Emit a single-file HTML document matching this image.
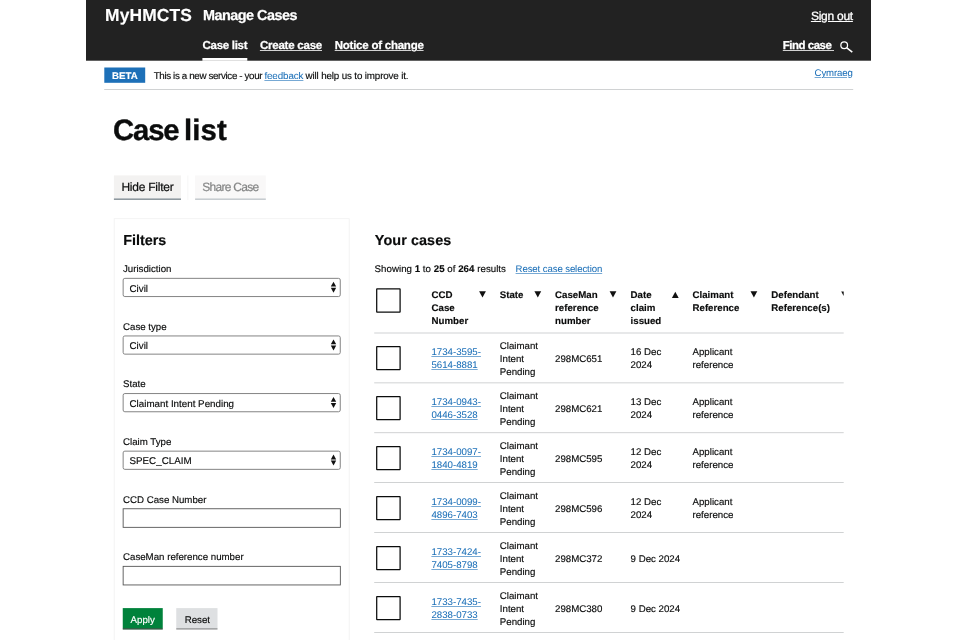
<!DOCTYPE html><html lang="en"><head><meta charset="utf-8"><title>Case list - Manage Cases</title>
<style>html,body{margin:0;padding:0;background:#fff;}body{width:960px;height:640px;position:relative;overflow:hidden;will-change:transform;text-rendering:geometricPrecision;font-family:"Liberation Sans", Arial, sans-serif;}div,span,a{position:absolute;box-sizing:border-box;}span,a{white-space:nowrap;display:block;-webkit-text-stroke:0.15px;}a{text-decoration:underline;text-decoration-thickness:0.6px;text-underline-offset:1px;}svg{position:absolute;overflow:visible}</style></head><body>
<svg width="960" height="640" viewBox="0 0 960 640" style="left:0;top:0">
<rect x="86.00" y="0.00" width="785.00" height="60.70" fill="#222222"/>
<rect x="202.40" y="58.00" width="44.90" height="2.80" fill="#fff"/>
<circle cx="844.2" cy="45.3" r="3.35" fill="none" stroke="#fff" stroke-width="1.25"/><path d="M846.8 47.9 L852.3 52.2" stroke="#fff" stroke-width="1.5" fill="none"/>
<rect x="104.30" y="67.50" width="40.90" height="15.30" fill="#1d70b8"/>
<rect x="104.20" y="89.10" width="749.00" height="0.60" fill="#b1b4b6"/>
<rect x="113.90" y="175.40" width="67.10" height="23.20" fill="#f3f2f1"/>
<rect x="113.90" y="198.40" width="67.10" height="1.60" fill="#8f999f"/>
<rect x="187.50" y="175.40" width="0.80" height="24.60" fill="#f3f3f3"/>
<rect x="195.10" y="175.40" width="70.70" height="23.20" fill="#f9f8f8"/>
<rect x="195.10" y="198.40" width="70.70" height="1.60" fill="#c7ccd0"/>
<rect x="114.20" y="218.70" width="235.00" height="440.00" fill="none" stroke="#f1f1f1" stroke-width="0.8"/>
<rect x="123.15" y="278.35" width="217.10" height="18.20" fill="#fff" stroke="#767676" stroke-width="0.9" rx="1.7"/>
<path d="M330.80 286.60 L336.20 286.60 L333.50 281.80 Z" fill="#111"/>
<path d="M330.80 287.80 L336.20 287.80 L333.50 292.80 Z" fill="#111"/>
<rect x="123.15" y="335.95" width="217.10" height="18.20" fill="#fff" stroke="#767676" stroke-width="0.9" rx="1.7"/>
<path d="M330.80 344.20 L336.20 344.20 L333.50 339.40 Z" fill="#111"/>
<path d="M330.80 345.40 L336.20 345.40 L333.50 350.40 Z" fill="#111"/>
<rect x="123.15" y="393.55" width="217.10" height="18.20" fill="#fff" stroke="#767676" stroke-width="0.9" rx="1.7"/>
<path d="M330.80 401.80 L336.20 401.80 L333.50 397.00 Z" fill="#111"/>
<path d="M330.80 403.00 L336.20 403.00 L333.50 408.00 Z" fill="#111"/>
<rect x="123.15" y="451.15" width="217.10" height="18.20" fill="#fff" stroke="#767676" stroke-width="0.9" rx="1.7"/>
<path d="M330.80 459.40 L336.20 459.40 L333.50 454.60 Z" fill="#111"/>
<path d="M330.80 460.60 L336.20 460.60 L333.50 465.60 Z" fill="#111"/>
<rect x="123.15" y="508.75" width="217.20" height="18.60" fill="#fff" stroke="#555" stroke-width="0.9"/>
<rect x="123.15" y="566.35" width="217.20" height="18.60" fill="#fff" stroke="#555" stroke-width="0.9"/>
<rect x="122.75" y="608.10" width="40.00" height="20.30" fill="#00823b"/>
<rect x="122.75" y="628.30" width="40.00" height="1.20" fill="#003418"/>
<rect x="176.25" y="608.10" width="41.25" height="20.30" fill="#dee0e2"/>
<rect x="176.25" y="628.30" width="41.25" height="1.20" fill="#858688"/>
<rect x="376.70" y="288.90" width="23.40" height="23.10" fill="#fff" stroke="#0b0c0c" stroke-width="1.25" rx="0.3"/>
<path d="M479.10 291.20 L485.90 291.20 L482.50 297.50 Z" fill="#111"/>
<path d="M534.40 291.20 L541.20 291.20 L537.80 297.50 Z" fill="#111"/>
<path d="M609.60 291.20 L616.40 291.20 L613.00 297.50 Z" fill="#111"/>
<path d="M671.90 298.10 L678.70 298.10 L675.30 291.80 Z" fill="#111"/>
<path d="M750.50 291.20 L757.30 291.20 L753.90 297.50 Z" fill="#111"/>
<path d="M841.2 291.6 L843.7 291.6 L843.7 296.0 Z" fill="#111"/>
<rect x="374.20" y="332.70" width="469.50" height="0.60" fill="#b1b4b6"/>
<rect x="374.20" y="382.60" width="469.50" height="0.60" fill="#b1b4b6"/>
<rect x="374.20" y="432.50" width="469.50" height="0.60" fill="#b1b4b6"/>
<rect x="374.20" y="482.40" width="469.50" height="0.60" fill="#b1b4b6"/>
<rect x="374.20" y="532.30" width="469.50" height="0.60" fill="#b1b4b6"/>
<rect x="374.20" y="582.20" width="469.50" height="0.60" fill="#b1b4b6"/>
<rect x="374.20" y="632.10" width="469.50" height="0.60" fill="#b1b4b6"/>
<rect x="376.70" y="346.50" width="23.40" height="23.10" fill="#fff" stroke="#0b0c0c" stroke-width="1.25" rx="0.3"/>
<rect x="376.70" y="396.50" width="23.40" height="23.10" fill="#fff" stroke="#0b0c0c" stroke-width="1.25" rx="0.3"/>
<rect x="376.70" y="446.50" width="23.40" height="23.10" fill="#fff" stroke="#0b0c0c" stroke-width="1.25" rx="0.3"/>
<rect x="376.70" y="496.50" width="23.40" height="23.10" fill="#fff" stroke="#0b0c0c" stroke-width="1.25" rx="0.3"/>
<rect x="376.70" y="546.50" width="23.40" height="23.10" fill="#fff" stroke="#0b0c0c" stroke-width="1.25" rx="0.3"/>
<rect x="376.70" y="596.50" width="23.40" height="23.10" fill="#fff" stroke="#0b0c0c" stroke-width="1.25" rx="0.3"/>
</svg>
<span id="t0" style="left:105.00px;top:4.00px;font-size:17.4px;line-height:22.62px;font-weight:700;color:#ffffff;letter-spacing:0.143px;">MyHMCTS</span>
<span id="t1" style="left:203.00px;top:7.01px;font-size:14.4px;line-height:18.72px;font-weight:700;color:#ffffff;letter-spacing:-0.499px;-webkit-text-stroke:0.25px #fff;">Manage Cases</span>
<a id="t2" style="left:810.90px;top:9.01px;font-size:12px;line-height:15.6px;font-weight:400;color:#ffffff;letter-spacing:-0.256px;text-underline-offset:1px;text-decoration-thickness:0.9px;-webkit-text-stroke:0.3px #fff;">Sign out</a>
<span id="t3" style="left:202.50px;top:39.01px;font-size:11.5px;line-height:14.95px;font-weight:700;color:#ffffff;letter-spacing:-0.285px;-webkit-text-stroke:0.25px #fff;">Case list</span>
<a id="t4" style="left:259.90px;top:39.01px;font-size:11.5px;line-height:14.95px;font-weight:700;color:#ffffff;letter-spacing:-0.225px;text-underline-offset:1.1px;text-decoration-thickness:0.9px;text-decoration-color:rgba(255,255,255,0.8);-webkit-text-stroke:0.25px #fff;">Create case</a>
<a id="t5" style="left:334.70px;top:39.01px;font-size:11.5px;line-height:14.95px;font-weight:700;color:#ffffff;letter-spacing:-0.235px;text-underline-offset:1.1px;text-decoration-thickness:0.9px;text-decoration-color:rgba(255,255,255,0.8);-webkit-text-stroke:0.25px #fff;">Notice of change</a>
<a id="t6" style="left:782.80px;top:39.01px;font-size:11.5px;line-height:14.95px;font-weight:700;color:#ffffff;letter-spacing:-0.505px;text-underline-offset:1.1px;text-decoration-thickness:0.9px;text-decoration-color:rgba(255,255,255,0.8);-webkit-text-stroke:0.25px #fff;">Find case&nbsp;</a>
<span id="t7" style="left:112.00px;top:71.01px;font-size:9.7px;line-height:12.61px;font-weight:700;color:#ffffff;letter-spacing:0.061px;">BETA</span>
<span id="t8" style="left:153.70px;top:71.02px;font-size:9.8px;line-height:12.74px;font-weight:400;color:#0b0c0c;letter-spacing:-0.364px;">This is a new service - your</span>
<a id="t9" style="left:264.40px;top:71.02px;font-size:9.8px;line-height:12.74px;font-weight:400;color:#1d70b8;letter-spacing:-0.096px;text-decoration-color:rgba(29,112,184,0.6);-webkit-text-stroke:0.05px;">feedback</a>
<span id="t10" style="left:305.60px;top:71.02px;font-size:9.8px;line-height:12.74px;font-weight:400;color:#0b0c0c;letter-spacing:-0.145px;">will help us to improve it.</span>
<a id="t11" style="left:814.60px;top:68.01px;font-size:9.6px;line-height:12.48px;font-weight:400;color:#1d70b8;letter-spacing:-0.132px;text-decoration-color:rgba(29,112,184,0.6);-webkit-text-stroke:0.05px;">Cymraeg</a>
<span id="t12" style="left:113.00px;top:112.02px;font-size:29.3px;line-height:38.09px;font-weight:700;color:#0b0c0c;letter-spacing:-1.137px;-webkit-text-stroke:0.35px #0b0c0c;">Case</span>
<span id="t13" style="left:183.90px;top:112.02px;font-size:29.3px;line-height:38.09px;font-weight:700;color:#0b0c0c;letter-spacing:0.189px;-webkit-text-stroke:0.35px #0b0c0c;">list</span>
<span id="t14" style="left:121.40px;top:180.00px;font-size:12px;line-height:15.6px;font-weight:400;color:#0b0c0c;letter-spacing:-0.235px;-webkit-text-stroke:0.2px #0b0c0c;">Hide Filter</span>
<span id="t15" style="left:202.20px;top:180.00px;font-size:12px;line-height:15.6px;font-weight:400;color:#858686;letter-spacing:-0.708px;-webkit-text-stroke:0.2px #858686;">Share Case</span>
<span id="t16" style="left:123.20px;top:232.00px;font-size:14.4px;line-height:18.72px;font-weight:700;color:#0b0c0c;">Filters</span>
<span id="t17" style="left:123.00px;top:264.02px;font-size:9.7px;line-height:12.61px;font-weight:400;color:#0b0c0c;">Jurisdiction</span>
<span id="t18" style="left:129.50px;top:284.00px;font-size:9.8px;line-height:12.74px;font-weight:400;color:#0b0c0c;">Civil</span>
<span id="t19" style="left:123.00px;top:322.01px;font-size:9.7px;line-height:12.61px;font-weight:400;color:#0b0c0c;">Case type</span>
<span id="t20" style="left:129.50px;top:341.01px;font-size:9.8px;line-height:12.74px;font-weight:400;color:#0b0c0c;">Civil</span>
<span id="t21" style="left:123.00px;top:379.01px;font-size:9.7px;line-height:12.61px;font-weight:400;color:#0b0c0c;">State</span>
<span id="t22" style="left:129.50px;top:399.02px;font-size:9.8px;line-height:12.74px;font-weight:400;color:#0b0c0c;">Claimant Intent Pending</span>
<span id="t23" style="left:123.00px;top:437.01px;font-size:9.7px;line-height:12.61px;font-weight:400;color:#0b0c0c;">Claim Type</span>
<span id="t24" style="left:129.50px;top:456.01px;font-size:9.8px;line-height:12.74px;font-weight:400;color:#0b0c0c;">SPEC_CLAIM</span>
<span id="t25" style="left:123.00px;top:495.01px;font-size:9.7px;line-height:12.61px;font-weight:400;color:#0b0c0c;">CCD Case Number</span>
<span id="t26" style="left:123.00px;top:552.01px;font-size:9.7px;line-height:12.61px;font-weight:400;color:#0b0c0c;">CaseMan reference number</span>
<span id="t27" style="left:130.60px;top:615.02px;font-size:9.7px;line-height:12.61px;font-weight:400;color:#ffffff;letter-spacing:0.013px;">Apply</span>
<span id="t28" style="left:184.75px;top:615.02px;font-size:9.7px;line-height:12.61px;font-weight:400;color:#0b0c0c;letter-spacing:-0.023px;">Reset</span>
<span id="t29" style="left:374.80px;top:232.00px;font-size:14.4px;line-height:18.72px;font-weight:700;color:#0b0c0c;letter-spacing:0.077px;">Your cases</span>
<span id="t30" style="left:374.60px;top:264.01px;font-size:9.7px;line-height:12.61px;font-weight:400;color:#0b0c0c;letter-spacing:0.034px;">Showing <b>1</b> to <b>25</b> of <b>264</b> results</span>
<a id="t31" style="left:515.60px;top:264.02px;font-size:9.6px;line-height:12.48px;font-weight:400;color:#1d70b8;letter-spacing:-0.097px;text-decoration-color:rgba(29,112,184,0.6);-webkit-text-stroke:0.05px;">Reset case selection</a>
<span id="t32" style="left:431.60px;top:290.01px;font-size:9.7px;line-height:12.61px;font-weight:700;color:#0b0c0c;">CCD</span>
<span id="t33" style="left:431.60px;top:303.01px;font-size:9.7px;line-height:12.61px;font-weight:700;color:#0b0c0c;">Case</span>
<span id="t34" style="left:431.60px;top:316.01px;font-size:9.7px;line-height:12.61px;font-weight:700;color:#0b0c0c;">Number</span>
<span id="t35" style="left:499.80px;top:290.01px;font-size:9.7px;line-height:12.61px;font-weight:700;color:#0b0c0c;">State</span>
<span id="t36" style="left:555.10px;top:290.01px;font-size:9.7px;line-height:12.61px;font-weight:700;color:#0b0c0c;">CaseMan</span>
<span id="t37" style="left:555.10px;top:303.01px;font-size:9.7px;line-height:12.61px;font-weight:700;color:#0b0c0c;">reference</span>
<span id="t38" style="left:555.10px;top:316.01px;font-size:9.7px;line-height:12.61px;font-weight:700;color:#0b0c0c;">number</span>
<span id="t39" style="left:630.60px;top:290.01px;font-size:9.7px;line-height:12.61px;font-weight:700;color:#0b0c0c;">Date</span>
<span id="t40" style="left:630.60px;top:303.01px;font-size:9.7px;line-height:12.61px;font-weight:700;color:#0b0c0c;">claim</span>
<span id="t41" style="left:630.60px;top:316.01px;font-size:9.7px;line-height:12.61px;font-weight:700;color:#0b0c0c;">issued</span>
<span id="t42" style="left:692.50px;top:290.01px;font-size:9.7px;line-height:12.61px;font-weight:700;color:#0b0c0c;">Claimant</span>
<span id="t43" style="left:692.50px;top:303.01px;font-size:9.7px;line-height:12.61px;font-weight:700;color:#0b0c0c;">Reference</span>
<span id="t44" style="left:771.30px;top:290.01px;font-size:9.7px;line-height:12.61px;font-weight:700;color:#0b0c0c;">Defendant</span>
<span id="t45" style="left:771.30px;top:303.01px;font-size:9.7px;line-height:12.61px;font-weight:700;color:#0b0c0c;">Reference(s)</span>
<a id="t46" style="left:431.40px;top:347.02px;font-size:9.7px;line-height:12.61px;font-weight:400;color:#1d70b8;text-decoration-color:rgba(29,112,184,0.6);-webkit-text-stroke:0.05px;">1734-3595-</a>
<a id="t47" style="left:431.40px;top:360.02px;font-size:9.7px;line-height:12.61px;font-weight:400;color:#1d70b8;text-decoration-color:rgba(29,112,184,0.6);-webkit-text-stroke:0.05px;">5614-8881</a>
<span id="t48" style="left:499.80px;top:341.01px;font-size:9.7px;line-height:12.61px;font-weight:400;color:#0b0c0c;">Claimant</span>
<span id="t49" style="left:499.80px;top:354.01px;font-size:9.7px;line-height:12.61px;font-weight:400;color:#0b0c0c;">Intent</span>
<span id="t50" style="left:499.80px;top:367.01px;font-size:9.7px;line-height:12.61px;font-weight:400;color:#0b0c0c;">Pending</span>
<span id="t51" style="left:555.00px;top:354.01px;font-size:9.7px;line-height:12.61px;font-weight:400;color:#0b0c0c;">298MC651</span>
<span id="t52" style="left:630.60px;top:347.02px;font-size:9.7px;line-height:12.61px;font-weight:400;color:#0b0c0c;">16 Dec</span>
<span id="t53" style="left:630.60px;top:360.02px;font-size:9.7px;line-height:12.61px;font-weight:400;color:#0b0c0c;">2024</span>
<span id="t54" style="left:692.50px;top:347.02px;font-size:9.7px;line-height:12.61px;font-weight:400;color:#0b0c0c;">Applicant</span>
<span id="t55" style="left:692.50px;top:360.02px;font-size:9.7px;line-height:12.61px;font-weight:400;color:#0b0c0c;">reference</span>
<a id="t56" style="left:431.40px;top:397.02px;font-size:9.7px;line-height:12.61px;font-weight:400;color:#1d70b8;text-decoration-color:rgba(29,112,184,0.6);-webkit-text-stroke:0.05px;">1734-0943-</a>
<a id="t57" style="left:431.40px;top:410.02px;font-size:9.7px;line-height:12.61px;font-weight:400;color:#1d70b8;text-decoration-color:rgba(29,112,184,0.6);-webkit-text-stroke:0.05px;">0446-3528</a>
<span id="t58" style="left:499.80px;top:391.01px;font-size:9.7px;line-height:12.61px;font-weight:400;color:#0b0c0c;">Claimant</span>
<span id="t59" style="left:499.80px;top:404.01px;font-size:9.7px;line-height:12.61px;font-weight:400;color:#0b0c0c;">Intent</span>
<span id="t60" style="left:499.80px;top:417.01px;font-size:9.7px;line-height:12.61px;font-weight:400;color:#0b0c0c;">Pending</span>
<span id="t61" style="left:555.00px;top:404.01px;font-size:9.7px;line-height:12.61px;font-weight:400;color:#0b0c0c;">298MC621</span>
<span id="t62" style="left:630.60px;top:397.02px;font-size:9.7px;line-height:12.61px;font-weight:400;color:#0b0c0c;">13 Dec</span>
<span id="t63" style="left:630.60px;top:410.02px;font-size:9.7px;line-height:12.61px;font-weight:400;color:#0b0c0c;">2024</span>
<span id="t64" style="left:692.50px;top:397.02px;font-size:9.7px;line-height:12.61px;font-weight:400;color:#0b0c0c;">Applicant</span>
<span id="t65" style="left:692.50px;top:410.02px;font-size:9.7px;line-height:12.61px;font-weight:400;color:#0b0c0c;">reference</span>
<a id="t66" style="left:431.40px;top:447.02px;font-size:9.7px;line-height:12.61px;font-weight:400;color:#1d70b8;text-decoration-color:rgba(29,112,184,0.6);-webkit-text-stroke:0.05px;">1734-0097-</a>
<a id="t67" style="left:431.40px;top:460.02px;font-size:9.7px;line-height:12.61px;font-weight:400;color:#1d70b8;text-decoration-color:rgba(29,112,184,0.6);-webkit-text-stroke:0.05px;">1840-4819</a>
<span id="t68" style="left:499.80px;top:441.01px;font-size:9.7px;line-height:12.61px;font-weight:400;color:#0b0c0c;">Claimant</span>
<span id="t69" style="left:499.80px;top:454.01px;font-size:9.7px;line-height:12.61px;font-weight:400;color:#0b0c0c;">Intent</span>
<span id="t70" style="left:499.80px;top:467.01px;font-size:9.7px;line-height:12.61px;font-weight:400;color:#0b0c0c;">Pending</span>
<span id="t71" style="left:555.00px;top:454.01px;font-size:9.7px;line-height:12.61px;font-weight:400;color:#0b0c0c;">298MC595</span>
<span id="t72" style="left:630.60px;top:447.02px;font-size:9.7px;line-height:12.61px;font-weight:400;color:#0b0c0c;">12 Dec</span>
<span id="t73" style="left:630.60px;top:460.02px;font-size:9.7px;line-height:12.61px;font-weight:400;color:#0b0c0c;">2024</span>
<span id="t74" style="left:692.50px;top:447.02px;font-size:9.7px;line-height:12.61px;font-weight:400;color:#0b0c0c;">Applicant</span>
<span id="t75" style="left:692.50px;top:460.02px;font-size:9.7px;line-height:12.61px;font-weight:400;color:#0b0c0c;">reference</span>
<a id="t76" style="left:431.40px;top:497.02px;font-size:9.7px;line-height:12.61px;font-weight:400;color:#1d70b8;text-decoration-color:rgba(29,112,184,0.6);-webkit-text-stroke:0.05px;">1734-0099-</a>
<a id="t77" style="left:431.40px;top:510.02px;font-size:9.7px;line-height:12.61px;font-weight:400;color:#1d70b8;text-decoration-color:rgba(29,112,184,0.6);-webkit-text-stroke:0.05px;">4896-7403</a>
<span id="t78" style="left:499.80px;top:491.01px;font-size:9.7px;line-height:12.61px;font-weight:400;color:#0b0c0c;">Claimant</span>
<span id="t79" style="left:499.80px;top:504.01px;font-size:9.7px;line-height:12.61px;font-weight:400;color:#0b0c0c;">Intent</span>
<span id="t80" style="left:499.80px;top:517.01px;font-size:9.7px;line-height:12.61px;font-weight:400;color:#0b0c0c;">Pending</span>
<span id="t81" style="left:555.00px;top:504.01px;font-size:9.7px;line-height:12.61px;font-weight:400;color:#0b0c0c;">298MC596</span>
<span id="t82" style="left:630.60px;top:497.02px;font-size:9.7px;line-height:12.61px;font-weight:400;color:#0b0c0c;">12 Dec</span>
<span id="t83" style="left:630.60px;top:510.02px;font-size:9.7px;line-height:12.61px;font-weight:400;color:#0b0c0c;">2024</span>
<span id="t84" style="left:692.50px;top:497.02px;font-size:9.7px;line-height:12.61px;font-weight:400;color:#0b0c0c;">Applicant</span>
<span id="t85" style="left:692.50px;top:510.02px;font-size:9.7px;line-height:12.61px;font-weight:400;color:#0b0c0c;">reference</span>
<a id="t86" style="left:431.40px;top:547.02px;font-size:9.7px;line-height:12.61px;font-weight:400;color:#1d70b8;text-decoration-color:rgba(29,112,184,0.6);-webkit-text-stroke:0.05px;">1733-7424-</a>
<a id="t87" style="left:431.40px;top:560.02px;font-size:9.7px;line-height:12.61px;font-weight:400;color:#1d70b8;text-decoration-color:rgba(29,112,184,0.6);-webkit-text-stroke:0.05px;">7405-8798</a>
<span id="t88" style="left:499.80px;top:541.01px;font-size:9.7px;line-height:12.61px;font-weight:400;color:#0b0c0c;">Claimant</span>
<span id="t89" style="left:499.80px;top:554.01px;font-size:9.7px;line-height:12.61px;font-weight:400;color:#0b0c0c;">Intent</span>
<span id="t90" style="left:499.80px;top:567.01px;font-size:9.7px;line-height:12.61px;font-weight:400;color:#0b0c0c;">Pending</span>
<span id="t91" style="left:555.00px;top:554.01px;font-size:9.7px;line-height:12.61px;font-weight:400;color:#0b0c0c;">298MC372</span>
<span id="t92" style="left:630.60px;top:554.01px;font-size:9.7px;line-height:12.61px;font-weight:400;color:#0b0c0c;">9 Dec 2024</span>
<a id="t93" style="left:431.40px;top:597.02px;font-size:9.7px;line-height:12.61px;font-weight:400;color:#1d70b8;text-decoration-color:rgba(29,112,184,0.6);-webkit-text-stroke:0.05px;">1733-7435-</a>
<a id="t94" style="left:431.40px;top:610.02px;font-size:9.7px;line-height:12.61px;font-weight:400;color:#1d70b8;text-decoration-color:rgba(29,112,184,0.6);-webkit-text-stroke:0.05px;">2838-0733</a>
<span id="t95" style="left:499.80px;top:591.01px;font-size:9.7px;line-height:12.61px;font-weight:400;color:#0b0c0c;">Claimant</span>
<span id="t96" style="left:499.80px;top:604.01px;font-size:9.7px;line-height:12.61px;font-weight:400;color:#0b0c0c;">Intent</span>
<span id="t97" style="left:499.80px;top:617.01px;font-size:9.7px;line-height:12.61px;font-weight:400;color:#0b0c0c;">Pending</span>
<span id="t98" style="left:555.00px;top:604.01px;font-size:9.7px;line-height:12.61px;font-weight:400;color:#0b0c0c;">298MC380</span>
<span id="t99" style="left:630.60px;top:604.01px;font-size:9.7px;line-height:12.61px;font-weight:400;color:#0b0c0c;">9 Dec 2024</span>
</body></html>
